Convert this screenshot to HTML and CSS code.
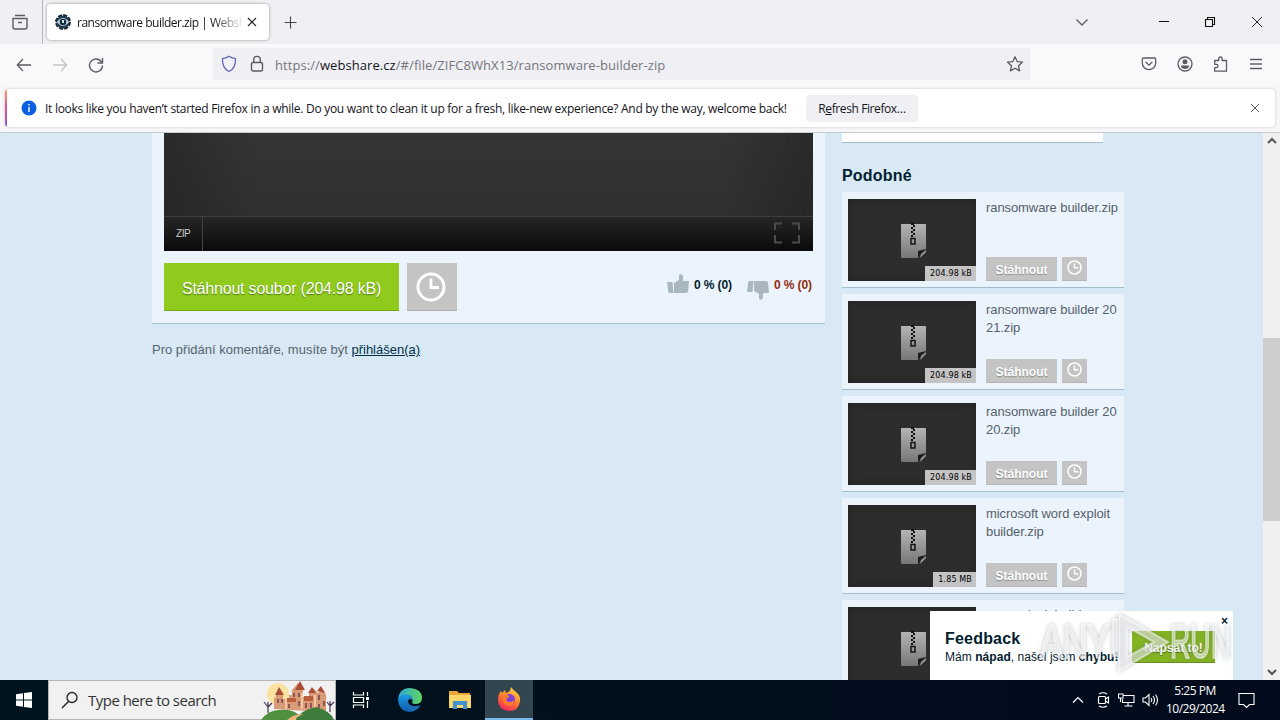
FILE: index.html
```html
<!DOCTYPE html>
<html lang="cs">
<head>
  <meta charset="UTF-8">
  <title>ransomware builder.zip | Webshare</title>
  <link rel="stylesheet" href="styles.css">
</head>
<body>
  <svg class="defs" width="0" height="0">
    <defs>
      <linearGradient id="paper" x1="0" y1="0" x2="0" y2="1">
        <stop offset="0" stop-color="#b4b4b4"/>
        <stop offset="1" stop-color="#777"/>
      </linearGradient>
      <symbol id="zip" viewBox="0 0 26 36">
        <path d="M1 1h24q1 0 1 1v24l-8 9H2q-1 0-1-1z" fill="url(#paper)"/>
        <path d="M18 35v-7l8-2z" fill="#1c1c1c"/>
        <path d="M20 35l6-6v-2l-5 4z" fill="#999"/>
        <path d="M11 0h3v2h-3zM13 2h2v2h-2zM11 4h2v2h-2zM13 6h2v2h-2zM11 8h2v2h-2zM13 10h2v2h-2zM11 12h2v2h-2z" fill="#111"/>
        <path d="M11 15.500h4v5.500h-4z" fill="none" stroke="#151515" stroke-width="1.500"/>
      </symbol>
      <symbol id="clock" viewBox="0 0 30 30">
        <circle cx="15" cy="15" r="13" fill="none" stroke="#fff" stroke-width="3"/>
        <path d="M15 6.500V15.500h8" fill="none" stroke="#fff" stroke-width="2.800"/>
      </symbol>
      <symbol id="thumb" viewBox="0 0 22 20">
        <path d="M0 8h5.500l1 11H1.500z" fill="#a9b8bf"/>
        <path d="M7 9l5-3V1l2-1 2 2v5h6l-1 11-2 1H7z" fill="#a9b8bf"/>
      </symbol>
    </defs>
  </svg>

  <div class="tabs">
    <div class="view-btn">
      <svg width="18" height="18" viewBox="0 0 18 18"><path d="M4 2.500h10M2 5.500h14v8.500a2 2 0 0 1-2 2H4a2 2 0 0 1-2-2zM7 9.500h4" fill="none" stroke="#5b5b66" stroke-width="1.400"/></svg>
    </div>
    <div class="tab">
      <svg width="16" height="16" viewBox="0 0 16 16"><circle cx="8" cy="8" r="6.700" fill="none" stroke="#152c3b" stroke-width="2.500" stroke-dasharray="4 1.260"/><circle cx="8" cy="8" r="6.500" fill="#1d3b4d"/><path d="M2 8q6-8 12 0q-6 8-12 0z" fill="#c9dce6"/><circle cx="8" cy="8" r="3.300" fill="#122a3a"/><path d="M8 6v3" stroke="#e8f4fa" stroke-width="1.800"/></svg>
      <span class="tab-title">ransomware builder.zip | Websh</span>
      <svg width="10" height="10" viewBox="0 0 10 10"><path d="M1 1l8 8M9 1L1 9" stroke="#222" stroke-width="1.100"/></svg>
    </div>
    <svg class="plus" width="13" height="13" viewBox="0 0 13 13"><path d="M6.500 .5v12M.5 6.500h12" stroke="#45454e" stroke-width="1.100"/></svg>
    <div class="window-btns">
      <svg width="14" height="14" viewBox="0 0 14 14"><path d="M1.500 4.500L7 10l5.500-5.500" fill="none" stroke="#5b5b66" stroke-width="1.300"/></svg>
      <svg class="minimize" width="10" height="14" viewBox="0 0 10 14"><path d="M0 6.500h10" stroke="#111"/></svg>
      <svg width="12" height="12" viewBox="0 0 12 12"><path d="M1.500 3.500h7v7h-7zM3.500 3V1.500h7v7H9" fill="none" stroke="#111" stroke-width="1.100"/></svg>
      <svg width="12" height="12" viewBox="0 0 12 12"><path d="M1 1l10 10M11 1L1 11" stroke="#222"/></svg>
    </div>
  </div>

  <div class="toolbar">
    <div class="nav-btns">
      <svg width="16" height="16" viewBox="0 0 16 16"><path d="M15 8H1.500M7 2L1.300 8 7 14" fill="none" stroke="#5b5b66" stroke-width="1.300"/></svg>
      <svg width="16" height="16" viewBox="0 0 16 16"><path d="M1 8h13.500M9 2l5.700 6L9 14" fill="none" stroke="#c2c2c9" stroke-width="1.300"/></svg>
      <svg width="16" height="16" viewBox="0 0 16 16"><path d="M13.500 5A6.500 6.500 0 1 0 14.500 8.500M14.500 1v5h-5" fill="none" stroke="#5b5b66" stroke-width="1.400"/></svg>
    </div>
    <div class="urlbar">
      <svg width="16" height="18" viewBox="0 0 16 18"><path d="M8 1.300Q11 3.500 14.500 3.700Q15 13 8 16.500Q1 13 1.500 3.700Q5 3.500 8 1.300z" fill="none" stroke="#6563b4" stroke-width="1.300"/></svg>
      <svg width="14" height="18" viewBox="0 0 14 18"><rect x="1.500" y="7.500" width="11" height="8.500" rx="1.500" fill="none" stroke="#5b5b66" stroke-width="1.400"/><path d="M3.700 7.500V4.700a3.300 3.300 0 0 1 6.600 0v2.800" fill="none" stroke="#5b5b66" stroke-width="1.400"/></svg>
      <span class="url">https://<b>webshare.cz</b>/#/file/ZIFC8WhX13/ransomware-builder-zip</span>
      <svg width="18" height="18" viewBox="0 0 18 18"><path d="M9 1.800l2.200 4.800 5.200.6-3.900 3.500 1.100 5.200L9 13.300l-4.600 2.600 1.100-5.200L1.600 7.200l5.200-.6z" fill="none" stroke="#5b5b66" stroke-width="1.300" stroke-linejoin="round"/></svg>
    </div>
    <div class="tools">
      <svg width="16" height="16" viewBox="0 0 16 16"><path d="M2.500 2h11q1.200 0 1.200 1.200V7a6.700 6.700 0 0 1-13.400 0V3.200Q1.300 2 2.500 2zM4.700 6L8 9.200 11.300 6" fill="none" stroke="#5b5b66" stroke-width="1.300"/></svg>
      <svg width="16" height="16" viewBox="0 0 16 16"><circle cx="8" cy="8" r="7" fill="none" stroke="#5b5b66" stroke-width="1.300"/><circle cx="8" cy="5.700" r="2.500" fill="#5b5b66"/><path d="M3.700 9.500h8.600Q11.500 13 8 13T3.700 9.500z" fill="#5b5b66"/></svg>
      <svg width="16" height="16" viewBox="0 0 16 16"><path d="M1.700 4.500h4V2.700a1.700 1.700 0 0 1 3.400 0v1.800h4.400v10.700H1.700v-3.500h1.600a1.700 1.700 0 0 0 0-3.400H1.700z" fill="none" stroke="#5b5b66" stroke-width="1.300" stroke-linejoin="round"/></svg>
      <svg width="14" height="14" viewBox="0 0 14 14"><path d="M1 2.500h12M1 7h12M1 11.500h12" stroke="#5b5b66" stroke-width="1.300"/></svg>
    </div>
  </div>

  <div class="notice-wrap">
    <div class="notice">
      <svg width="16" height="16" viewBox="0 0 16 16"><circle cx="8" cy="8" r="7.500" fill="#0a60df"/><path d="M8 4v1.600M8 7v5" stroke="#fff" stroke-width="1.400"/></svg>
      <span class="notice-text">It looks like you haven’t started Firefox in a while. Do you want to clean it up for a fresh, like-new experience? And by the way, welcome back!</span>
      <span class="notice-btn">R<u>e</u>fresh Firefox…</span>
      <svg class="notice-close" width="10" height="10" viewBox="0 0 10 10"><path d="M1 1l8 8M9 1L1 9" stroke="#5b5b66"/></svg>
    </div>
  </div>

  <div class="viewport">
    <div class="page">
      <div class="main">
        <div class="file">
          <div class="player">
            <div class="controls">
              <span class="ext">ZIP</span>
              <svg width="28" height="22" viewBox="0 0 28 22"><path d="M9 1.500H2V8M2 13v7.500h7M19 1.500h7V8M26 13v7.500h-7" fill="none" stroke="#4c4c4c" stroke-width="2"/></svg>
            </div>
          </div>
          <div class="actions">
            <span class="download">Stáhnout soubor (204.98 kB)</span>
            <span class="later"><svg width="30" height="30"><use href="#clock"/></svg></span>
            <span class="vote up"><svg width="22" height="20"><use href="#thumb"/></svg>0 % (0)</span>
            <span class="vote down"><svg width="22" height="20"><use href="#thumb"/></svg>0 % (0)</span>
          </div>
        </div>
        <p class="comment">Pro přidání komentáře, musíte být <a>přihlášen(a)</a></p>
      </div>
      <div class="side">
        <div class="box-end"></div>
        <h2>Podobné</h2>
        <div class="item">
          <div class="preview"><svg width="26" height="36"><use href="#zip"/></svg><span class="size">204.98 kB</span></div>
          <div class="info">
            <div class="name">ransomware builder.zip</div>
            <div class="btns"><span class="get">Stáhnout</span><span class="wait"><svg width="15" height="15"><use href="#clock"/></svg></span></div>
          </div>
        </div>
        <div class="item">
          <div class="preview"><svg width="26" height="36"><use href="#zip"/></svg><span class="size">204.98 kB</span></div>
          <div class="info">
            <div class="name">ransomware builder 20<br>21.zip</div>
            <div class="btns"><span class="get">Stáhnout</span><span class="wait"><svg width="15" height="15"><use href="#clock"/></svg></span></div>
          </div>
        </div>
        <div class="item">
          <div class="preview"><svg width="26" height="36"><use href="#zip"/></svg><span class="size">204.98 kB</span></div>
          <div class="info">
            <div class="name">ransomware builder 20<br>20.zip</div>
            <div class="btns"><span class="get">Stáhnout</span><span class="wait"><svg width="15" height="15"><use href="#clock"/></svg></span></div>
          </div>
        </div>
        <div class="item">
          <div class="preview"><svg width="26" height="36"><use href="#zip"/></svg><span class="size">1.85 MB</span></div>
          <div class="info">
            <div class="name">microsoft word exploit<br>builder.zip</div>
            <div class="btns"><span class="get">Stáhnout</span><span class="wait"><svg width="15" height="15"><use href="#clock"/></svg></span></div>
          </div>
        </div>
        <div class="item last">
          <div class="preview"><svg width="26" height="36"><use href="#zip"/></svg></div>
          <div class="info">
            <div class="name">screen lock builder</div>
          </div>
        </div>
      </div>
    </div>
    <div class="scrollbar">
      <svg width="10" height="8" viewBox="0 0 10 8"><path d="M1 6l4-4 4 4" fill="none" stroke="#555" stroke-width="2"/></svg>
      <div class="handle"></div>
      <svg class="arrow-down" width="10" height="8" viewBox="0 0 10 8"><path d="M1 2l4 4 4-4" fill="none" stroke="#555" stroke-width="2"/></svg>
    </div>

    <div class="feedback">
      <div class="feedback-text">
        <h3>Feedback</h3>
        <p>Mám <b>nápad</b>, našel jsem <b>chybu!</b></p>
      </div>
      <span class="write">Napsat to!</span>
      <span class="close">×</span>
    </div>
    <svg class="watermark" width="200" height="66" viewBox="0 0 200 66">
      <g fill="#fff" fill-opacity=".5" stroke="#fff" stroke-opacity=".5" stroke-width="2">
        <text x="4" y="48" textLength="70" lengthAdjust="spacingAndGlyphs">ANY</text>
        <text x="134" y="48" textLength="61" lengthAdjust="spacingAndGlyphs">RUN</text>
        <path fill-rule="evenodd" d="M83 4l49 28-49 29zM91 17v30l27-15z"/>
        <path d="M77 9h4v37h-4z"/>
      </g>
    </svg>
  </div>

  <div class="taskbar">
    <div class="start"><svg width="16" height="16" viewBox="0 0 16 16"><path d="M0 2.200L7 1.200V7.500H0zM8 1.100L16 0v7.500H8zM0 8.500h7v6.300L0 13.800zM8 8.500h8V16l-8-1.100z" fill="#fff"/></svg></div>
    <div class="search">
      <svg width="18" height="18" viewBox="0 0 18 18"><circle cx="11" cy="6.500" r="5" fill="none" stroke="#222" stroke-width="1.300"/><path d="M7.500 10.500L1 17" stroke="#222" stroke-width="1.400"/></svg>
      <span>Type here to search</span>
      <svg class="castle" width="74" height="39" viewBox="0 0 74 39">
        <circle cx="17" cy="13" r="11" fill="#fbe2a0"/>
        <path d="M13 28V17l2-1V14l3-7 4 7v4h6v-4h3V9l6-7 5 7v7h6V12l4-5 5 5 5-4 3 6v17z" fill="#d99a78"/>
        <path d="M14 14l4-8 5 8zM34 9l5-9 5 9zM47 12l4-6 4 6zM56 10l4-5 4 7z" fill="#a94d35"/>
        <path d="M26 17h9v4h-9zM43 15h9v5h-9z" fill="#b95f40"/>
        <path d="M17 18v4M21 18v4M28 23v4M33 12v4M38 12v4M38 20v5M45 22v5M50 22v5M58 14v5M63 20v5M58 23v4" stroke="#72404a" stroke-width="1.500"/>
        <path d="M25 28V18M41 28V12M54 28V14" stroke="#f3c7a4" stroke-width="2"/>
        <path d="M7 32V21M7 26l-4-5M7 26l4-4M69 31V20M69 25l-3-4M69 25l4-4" fill="none" stroke="#4a3852" stroke-width="1.200"/>
        <path d="M0 39Q8 28 20 29Q31 28 38 34L44 39z" fill="#4f9141"/>
        <path d="M34 39Q40 29 55 26Q70 30 73 39z" fill="#3d7c3b"/>
        <path d="M26 39q6-6 17-6q-9 3-8 6z" fill="#efb678"/>
      </svg>
    </div>
    <div class="app"><svg width="18" height="16" viewBox="0 0 18 16"><path d="M1.500 0v3h10V0M1.500 16v-3h10v3M1.500 5.500h10v5h-10zM15.500 0v4M15.500 9v7" fill="none" stroke="#fff" stroke-width="1.200"/><path d="M14 5h3v3h-3z" fill="#fff"/></svg></div>
    <div class="app">
      <svg width="24" height="24" viewBox="0 0 24 24">
        <defs>
          <linearGradient id="edge1"><stop offset="0" stop-color="#2aa7dc"/><stop offset="1" stop-color="#61d65c"/></linearGradient>
          <linearGradient id="edge2" x1="0" y1="0" x2="0" y2="1"><stop offset="0" stop-color="#1c9ce0"/><stop offset="1" stop-color="#0c5bb0"/></linearGradient>
        </defs>
        <path d="M0 12Q1 0 12 0Q24 1 24 10Q24 16 17 16Q13 16 14.500 13Q15 7 8 7Q2 7 0 12z" fill="url(#edge1)"/>
        <path d="M0 12Q2 6 8 6.500Q14 7 14.500 12Q10 9 10 14Q12 20 22 17.500Q18 24 11 24Q1 23 0 12z" fill="url(#edge2)"/>
        <path d="M8 13Q7 20 14 23.500Q20 22 22 17.500Q12 21 8 13z" fill="#1a6fb4"/>
      </svg>
    </div>
    <div class="app"><svg width="22" height="18" viewBox="0 0 22 18"><path d="M0 0h8l2 2h11v15H0z" fill="#e9a83c"/><path d="M0 4h22v13H0z" fill="#fcd667"/><path d="M4 18v-8h14v8h-4v-4H8v4z" fill="#3f93d2"/></svg></div>
    <div class="app active">
      <svg width="24" height="24" viewBox="0 0 24 24">
        <defs><linearGradient id="fox" x1=".8" y1="0" x2=".3" y2="1"><stop offset="0" stop-color="#ffe14a"/><stop offset=".45" stop-color="#ff8a2a"/><stop offset="1" stop-color="#f0245c"/></linearGradient></defs>
        <path d="M14 0Q16 3 19 5Q24 9 23 14Q22 24 12 24Q1 23 1 13Q1 7 4 4L5 6L8 3L9 6Q13 6 14 0z" fill="url(#fox)"/>
        <circle cx="12.500" cy="12.500" r="5.500" fill="#7b3fe0"/>
        <path d="M5 9Q9 6 12 9Q13 11 9.500 11.500Q9 13 10.500 14.500Q14 16 17 13Q17 19 12 19Q5 18 5 9z" fill="#ff7a2b"/>
      </svg>
    </div>
    <div class="tray">
      <svg width="12" height="8" viewBox="0 0 12 8"><path d="M1 6.500L6 1.500l5 5" fill="none" stroke="#fff" stroke-width="1.200"/></svg>
      <svg width="14" height="16" viewBox="0 0 14 16"><rect x="1.500" y="4.500" width="7" height="7" rx="1" fill="none" stroke="#fff" stroke-width="1.200"/><path d="M8.500 7l3-2v6l-3-2M2 2Q6-.5 10 2M2 14q4 2.500 8 0" fill="none" stroke="#fff" stroke-width="1.100"/></svg>
      <svg width="17" height="14" viewBox="0 0 17 14"><path d="M5 2.500h11v7H4.500V6M10 9.500v3.500M6.500 13h8M.5 1h4.500v4H.5zM2.500 5v4" fill="none" stroke="#fff" stroke-width="1.100"/></svg>
      <svg width="17" height="14" viewBox="0 0 17 14"><path d="M1 5h2.500L7 1.500v11L3.500 9H1zM9 5q1.500 2 0 4M11 3q3 4 0 8M13.500 1.500q4 5.500 0 11" fill="none" stroke="#fff" stroke-width="1.100"/></svg>
      <div class="time">5:25 PM<br>10/29/2024</div>
      <svg width="17" height="17" viewBox="0 0 17 17"><path d="M1 1.500h15v11h-4.500L8.500 15.500 5.500 12.500H1z" fill="none" stroke="#fff" stroke-width="1.100"/></svg>
    </div>
  </div>
</body>
</html>
```
FILE: styles.css
```css
* {
  box-sizing: border-box;
}
body {
  margin: 0;
  width: 1280px;
  height: 720px;
  overflow: hidden;
  display: flex;
  flex-direction: column;
  font-family: "Open Sans", "Noto Sans", sans-serif;
  font-size: 12px;
  color: #15141a;
}
svg {
  display: block;
  flex: none;
}
.defs {
  position: absolute;
}

/* browser */
.tabs {
  height: 44px;
  background: #f0f0f4;
  display: flex;
  align-items: center;
}
.view-btn {
  width: 43px;
  height: 44px;
  padding: 13px 0 0 11px;
  border-right: 1px solid #b5b5bd;
}
.tab {
  width: 222px;
  height: 36px;
  margin-left: 4px;
  padding: 0 11px 0 8px;
  display: flex;
  align-items: center;
  background: #fff;
  border-radius: 4px;
  box-shadow: 0 0 3px rgba(0, 0, 0, 0.4);
}
.tab-title {
  width: 165px;
  margin: 0 5px 0 6px;
  padding-top: 1px;
  overflow: hidden;
  white-space: nowrap;
  letter-spacing: -0.5px;
  -webkit-mask-image: linear-gradient(to right, #000 135px, transparent 168px);
  mask-image: linear-gradient(to right, #000 135px, transparent 168px);
}
.plus {
  margin-left: 15px;
}
.window-btns {
  margin-left: auto;
  padding-right: 17px;
  display: flex;
  align-items: center;
  gap: 35px;
}
.minimize {
  margin-left: 35px;
}
.toolbar {
  height: 42px;
  background: #f9f9fb;
  display: flex;
  padding-top: 4px;
}
.nav-btns {
  width: 213px;
  height: 34px;
  padding-left: 16px;
  display: flex;
  align-items: center;
  gap: 20px;
}
.urlbar {
  width: 817px;
  height: 32px;
  padding: 0 6px 0 8px;
  display: flex;
  align-items: center;
  background: #f0f0f4;
}
.urlbar svg + svg {
  margin-left: 13px;
}
.url {
  flex: 1;
  margin-left: 11px;
  padding-top: 1px;
  font-size: 13px;
  letter-spacing: 0.07px;
  color: #74747d;
}
.url b {
  font-weight: normal;
  color: #15141a;
}
.tools {
  height: 32px;
  margin-left: auto;
  padding-right: 17px;
  display: flex;
  align-items: center;
  gap: 20px;
}
.notice-wrap {
  height: 47px;
  padding: 3px 5px 0;
  background: #f7f7f9;
  border-bottom: 1px solid #c6cbd0;
}
.notice {
  height: 38px;
  padding: 0 15px 0 16px;
  display: flex;
  align-items: center;
  background: linear-gradient(#ffa060, #e0559a 45%, #9059c8) no-repeat 0 0 / 2px 100%, #fff;
  border-radius: 4px;
  box-shadow: 0 0 3px rgba(0, 0, 0, 0.22);
}
.notice-text {
  width: 761px;
  margin-left: 8px;
  padding-top: 1px;
  white-space: nowrap;
  letter-spacing: -0.285px;
}
.notice-btn {
  width: 112px;
  height: 27px;
  line-height: 28px;
  background: #f0f0f4;
  border-radius: 4px;
  text-align: center;
  letter-spacing: -0.4px;
}
.notice-close {
  margin-left: auto;
}

/* page */
.viewport {
  position: relative;
  height: 547px;
  display: flex;
  overflow: hidden;
  background: #d8e9f5;
  font-family: "Liberation Sans", Arial, sans-serif;
}
.page {
  width: 1263px;
  padding-left: 152px;
  display: flex;
  gap: 17px;
}
.main {
  width: 673px;
}
.file {
  height: 191px;
  padding: 0 12px;
  background: #ebf4fc;
  border-bottom: 1px solid #a5bccb;
}
.player {
  height: 118px;
  padding-top: 83px;
  background: linear-gradient(to right, rgba(0, 0, 0, 0.2), transparent 15%, transparent 85%, rgba(0, 0, 0, 0.2)), linear-gradient(#353535, #2e2e2e);
}
.controls {
  height: 35px;
  padding-right: 12px;
  display: flex;
  align-items: center;
  justify-content: space-between;
  background: linear-gradient(#262626, #0a0a0a);
  border-top: 1px solid #3f3f3f;
}
.controls svg {
  margin-top: -2px;
}
.ext {
  width: 39px;
  height: 34px;
  line-height: 33px;
  padding-left: 12px;
  border-right: 1px solid #444;
  font-size: 10px;
  letter-spacing: -0.4px;
  color: #ccc;
}
.actions {
  display: flex;
  align-items: center;
  padding-top: 12px;
}
.download {
  width: 235px;
  height: 48px;
  line-height: 51px;
  text-align: center;
  background: #8fca1c;
  border-bottom: 1px solid #73a516;
  color: #fff;
  font-size: 16px;
  letter-spacing: -0.2px;
  text-shadow: 0 1px 1px #55780f;
}
.later {
  width: 50px;
  height: 48px;
  margin-left: 8px;
  padding: 9px;
  background: #c4c4c4;
  border-bottom: 1px solid #b0b0b0;
}
.vote {
  display: flex;
  align-items: center;
  gap: 5px;
  margin-top: -4px;
  font-weight: bold;
  white-space: nowrap;
  letter-spacing: -0.1px;
  color: #02202d;
}
.up {
  margin-left: 210px;
}
.up svg {
  margin-top: -2px;
}
.down {
  margin-left: 15px;
  color: #922c0c;
}
.down svg {
  margin-top: 7px;
  margin-bottom: -2px;
  transform: scaleY(-1);
}
.comment {
  margin: 17px 0 0;
  line-height: 18px;
  font-size: 13px;
  color: #56646e;
}
.comment a {
  color: #02304a;
  text-decoration: underline;
}
.side {
  width: 282px;
}
.box-end {
  width: 261px;
  height: 10px;
  background: #fff;
  border-bottom: 1px solid #a5bccb;
}
.side h2 {
  margin: 23px 0 6px;
  font-size: 16px;
  line-height: 20px;
  letter-spacing: 0.2px;
  color: #02202d;
}
.item {
  height: 96px;
  margin-bottom: 6px;
  padding: 7px 6px 6px;
  display: flex;
  gap: 10px;
  background: #ebf4fc;
  border-bottom: 1px solid #a5bccb;
}
.preview {
  position: relative;
  width: 128px;
  height: 82px;
  padding: 24px 0 0 52px;
  background: #2d2d2d;
  box-shadow: inset 0 0 10px #222;
}
.size {
  position: absolute;
  right: 0;
  bottom: 0;
  height: 15px;
  line-height: 16px;
  padding: 0 4px 0 5px;
  background: #c4c4c4;
  font-family: "DejaVu Sans", sans-serif;
  font-size: 8px;
  letter-spacing: 0.15px;
  color: #000;
}
.info {
  height: 82px;
  display: flex;
  flex-direction: column;
  justify-content: space-between;
}
.name {
  font-size: 13px;
  line-height: 18px;
  letter-spacing: -0.08px;
  white-space: nowrap;
  color: #56616b;
}
.last .name {
  line-height: 16px;
}
.btns {
  display: flex;
  gap: 5px;
}
.get {
  width: 71px;
  height: 24px;
  line-height: 26px;
  text-align: center;
  background: #c4c4c4;
  border-bottom: 1px solid #b5b5b5;
  color: #fff;
  font-weight: bold;
  text-shadow: 0 1px 1px #888;
}
.wait {
  width: 25px;
  height: 24px;
  padding: 3px 5px;
  background: #c4c4c4;
  border-bottom: 1px solid #b5b5b5;
}
.scrollbar {
  width: 17px;
  height: 547px;
  padding: 4px 0;
  display: flex;
  flex-direction: column;
  align-items: center;
  background: #f0f0f0;
}
.handle {
  width: 17px;
  height: 183px;
  margin-top: 193px;
  background: #cdcdcd;
}
.arrow-down {
  margin-top: auto;
}
.feedback {
  position: absolute;
  left: 930px;
  top: 478px;
  width: 303px;
  height: 69px;
  padding: 18px 18px 0 15px;
  display: flex;
  justify-content: space-between;
  background: #fff;
  color: #02202d;
}
.feedback h3 {
  margin: 0;
  font-size: 16px;
  line-height: 20px;
  letter-spacing: 0.2px;
}
.feedback p {
  margin: 0;
  line-height: 17px;
  white-space: nowrap;
  letter-spacing: 0.05px;
}
.write {
  width: 83px;
  height: 32px;
  margin-top: 2px;
  line-height: 34px;
  text-align: center;
  background: #84b422;
  border-bottom: 1px solid #668d1b;
  color: #fff;
  font-weight: bold;
  text-shadow: 0 1px 1px #4c6b10;
}
.close {
  position: absolute;
  right: 5px;
  top: 4px;
  line-height: 13px;
  font-weight: bold;
}
.watermark {
  position: absolute;
  left: 1036px;
  top: 477px;
  font-size: 49px;
  filter: drop-shadow(0 0 2px rgba(90, 100, 110, 0.6));
}

/* taskbar */
.taskbar {
  height: 40px;
  display: flex;
  background: linear-gradient(to right, #00141e, #020b1c);
  color: #fff;
}
.start {
  width: 48px;
  padding: 12px 16px;
}
.search {
  width: 288px;
  height: 40px;
  padding-left: 12px;
  display: flex;
  align-items: center;
  background: #f1f1f1;
  border: 1px solid #b5b5b5;
  color: #333;
  font-size: 15px;
}
.search span {
  margin-left: 9px;
  letter-spacing: -0.52px;
}
.castle {
  margin-left: auto;
}
.app {
  width: 50px;
  height: 40px;
  display: flex;
  align-items: center;
  justify-content: center;
}
.search + .app {
  width: 49px;
}
.active {
  width: 48px;
  background: #33454f;
  border-bottom: 2px solid #76b9ed;
}
.tray {
  margin-left: auto;
  padding-right: 25px;
  display: flex;
  align-items: center;
  gap: 7px;
}
.tray svg:first-child {
  margin-right: 6px;
}
.tray svg:last-child {
  margin-left: 7px;
}
.time {
  width: 58px;
  line-height: 18px;
  text-align: center;
  letter-spacing: -0.5px;
  white-space: nowrap;
}
```
